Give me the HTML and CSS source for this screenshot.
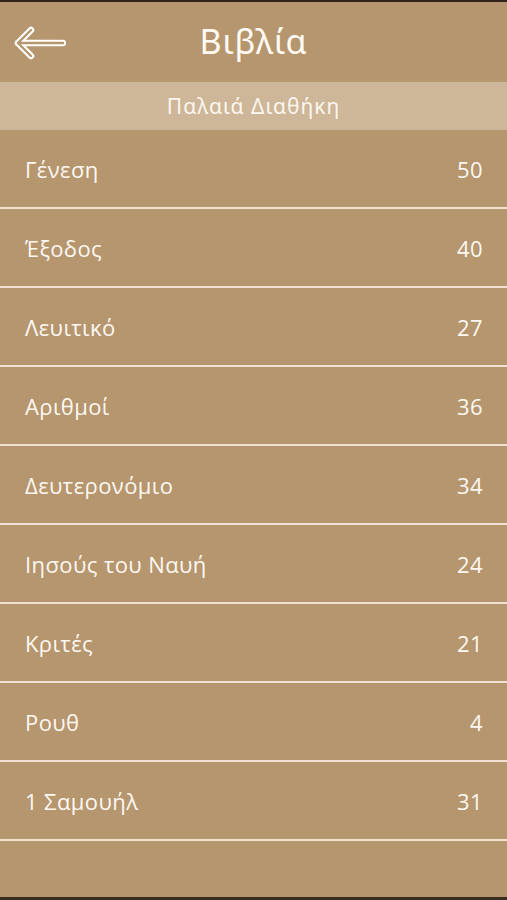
FILE: index.html
```html
<!DOCTYPE html>
<html lang="el">
<head>
<meta charset="utf-8">
<title>Βιβλία</title>
<link rel="stylesheet" href="styles.css">
</head>
<body>
<div class="screen">
  <div class="topedge"></div>
  <header class="navbar">
    <span class="back" aria-label="Πίσω">
      <svg width="52" height="34" viewBox="0 0 52 34">
        <path d="M17 4 L4 17 L17 30 M4 17 L49 17" fill="none" stroke="#ffffff" stroke-width="6.5" stroke-linecap="round" stroke-linejoin="round"/>
        <path d="M17 4 L4 17 L17 30 M4 17 L49 17" fill="none" stroke="#b5966e" stroke-width="2.4" stroke-linecap="round" stroke-linejoin="round"/>
      </svg>
    </span>
    <h1 class="title">Βιβλία</h1>
  </header>
  <div class="section">Παλαιά Διαθήκη</div>
  <ul class="list">
    <li class="row"><span>Γένεση</span><span>50</span></li>
    <li class="row"><span>Έξοδος</span><span>40</span></li>
    <li class="row"><span>Λευιτικό</span><span>27</span></li>
    <li class="row"><span>Αριθμοί</span><span>36</span></li>
    <li class="row"><span>Δευτερονόμιο</span><span>34</span></li>
    <li class="row"><span>Ιησούς του Ναυή</span><span>24</span></li>
    <li class="row"><span>Κριτές</span><span>21</span></li>
    <li class="row"><span>Ρουθ</span><span>4</span></li>
    <li class="row"><span>1 Σαμουήλ</span><span>31</span></li>
  </ul>
  <div class="filler"></div>
  <div class="bottomedge"></div>
</div>
</body>
</html>
```
FILE: styles.css
```css
html, body {
  margin: 0;
  padding: 0;
  background: #b5966e;
}
body {
  font-family: "Open Sans", "Liberation Sans", Arial, sans-serif;
  color: #fdf8f2;
}
.screen {
  width: 507px;
  height: 900px;
  display: flex;
  flex-direction: column;
  overflow: hidden;
}
.topedge {
  height: 2px;
  background: #2e241a;
  flex: none;
}
.navbar {
  height: 80px;
  flex: none;
  display: flex;
  align-items: center;
  justify-content: center;
  position: relative;
}
.back {
  position: absolute;
  left: 14px;
  top: 24px;
  display: block;
  height: 34px;
}
.back svg {
  display: block;
}
.title {
  margin: 0;
  font-family: "Noto Sans", "Open Sans", sans-serif;
  font-weight: 400;
  font-size: 34px;
  letter-spacing: 0.8px;
  color: #fffaf4;
  margin-top: -2px;
}
.section {
  height: 48px;
  flex: none;
  background: #ceb698;
  display: flex;
  align-items: center;
  justify-content: center;
  font-family: "Noto Sans", "Open Sans", sans-serif;
  font-size: 21px;
  color: #fbf6ef;
  letter-spacing: 1px;
}
.list {
  list-style: none;
  margin: 0;
  padding: 0;
}
.row {
  height: 77px;
  border-bottom: 2px solid #f3e2d3;
  display: flex;
  align-items: center;
  justify-content: space-between;
  padding: 0 24px 0 25px;
  font-size: 22px;
  letter-spacing: 0.4px;
  color: #fdf8f2;
}
.filler {
  flex: 1;
}
.bottomedge {
  height: 3px;
  background: #3a2e20;
  flex: none;
}
```
